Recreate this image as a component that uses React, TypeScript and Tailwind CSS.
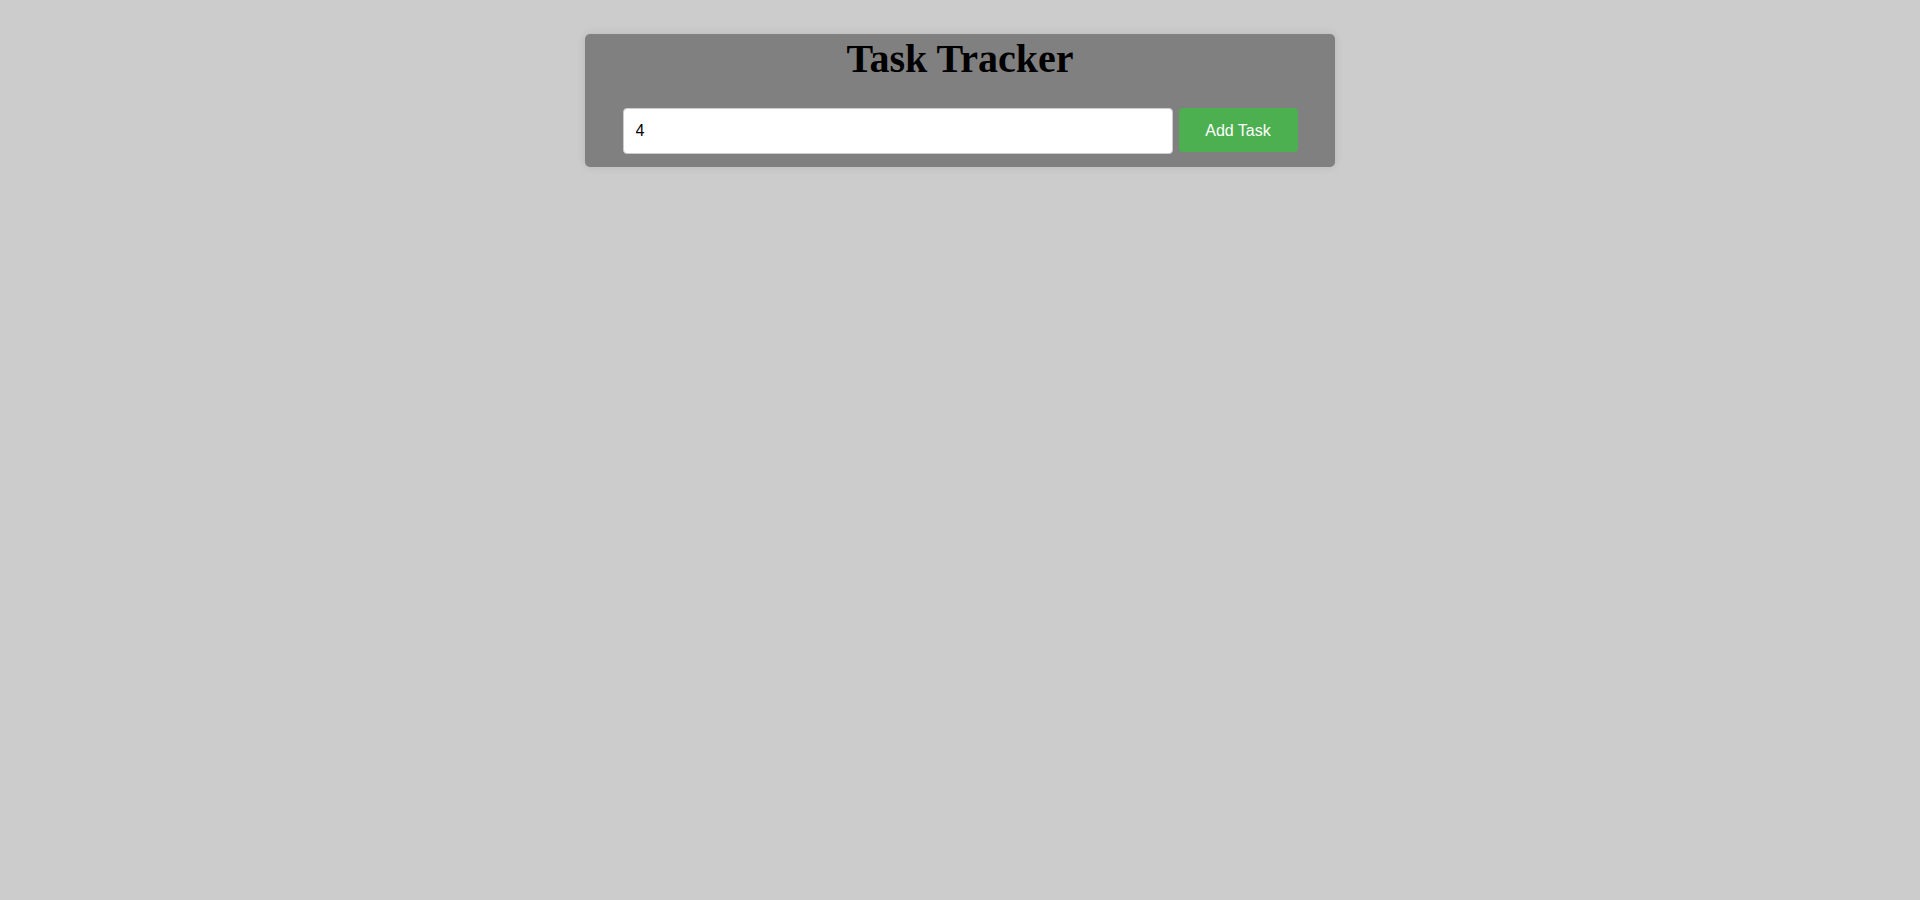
import React, { useState } from "react";

export default function App() {
  const [value, setValue] = useState("4");
  return (
    <div className="min-h-screen w-full bg-[#cccccc] pt-[34px]" style={{ fontFamily: '"Liberation Sans", Arial, sans-serif' }}>
      <div className="mx-auto w-[750px] h-[133px] rounded-[5px] bg-[#808080] shadow-[0_0_10px_rgba(0,0,0,0.1)] flex flex-col items-center">
        <h1
          className="text-[40px] font-bold leading-[46px] text-black m-0 pt-[2px]"
          style={{ fontFamily: '"Liberation Serif", "Times New Roman", serif' }}
        >
          Task Tracker
        </h1>
        <div className="mt-[26px] w-[675px] flex items-start gap-[6px]">
          <input
            value={value}
            onChange={(e) => setValue(e.target.value)}
            className="flex-1 h-[46px] bg-white border border-[#cccccc] rounded-[4px] pl-[12px] text-[16px] text-black outline-none"
          />
          <button className="w-[119px] h-[44px] pt-[1px] bg-[#4caf50] text-white text-[16px] rounded-[4px]">
            Add Task
          </button>
        </div>
      </div>
    </div>
  );
}
